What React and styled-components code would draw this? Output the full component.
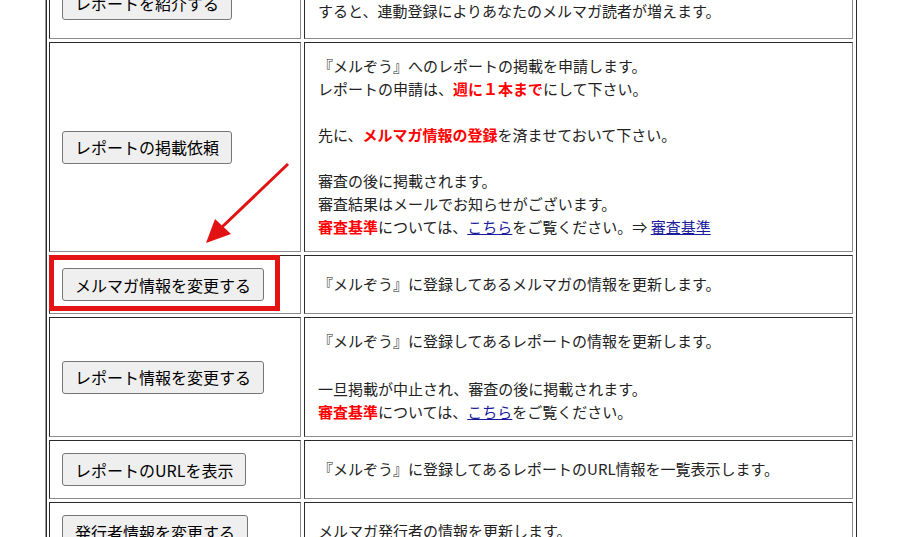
import React from "react";
import styled, { createGlobalStyle } from "styled-components";

const GlobalStyle = createGlobalStyle`
  body {
    margin: 0;
    background: #ffffff;
    font-family: "Noto Sans CJK JP", "Noto Sans", sans-serif;
    color: #222222;
  }
`;

const MenuTable = styled.table`
  margin: -37px 0 0 45px;
  width: 812px;
  table-layout: fixed;
  border-collapse: separate;
  border-spacing: 3px;
  border-top: 1px solid #9a9a9a;
  border-left: 1px solid #9a9a9a;
  border-right: 1px solid #2a2a2a;
  box-shadow: inset 1px 0 0 #2a2a2a;
`;

const Cell = styled.td`
  position: relative;
  box-sizing: border-box;
  padding: ${(p) => (p.$raised ? "8px 12px 16px 13px" : "11px 12px 13px 13px")};
  border: 1px solid;
  border-color: #2a2a2a #8c8c8c #8c8c8c #2a2a2a;
  vertical-align: middle;
`;

const ActionCell = styled(Cell)`
  width: 252px;
  padding: 12px;
`;

const ActionButton = styled.button`
  height: 33px;
  padding: 0 12px;
  font-family: inherit;
  font-size: 16px;
  line-height: 1;
  color: #000000;
  background: #efefef;
  border: 1px solid #767676;
  border-radius: 3px;
  cursor: pointer;
`;

const Para = styled.p`
  margin: ${(p) => (p.$gap ? `${p.$gap}px 0 0` : "0")};
  font-size: 15px;
  line-height: 23px;
  white-space: nowrap;
`;

const Red = styled.strong`
  color: #ff0000;
  font-weight: bold;
`;

const TextLink = styled.a`
  color: #1a1a9c;
  text-decoration: underline;
  cursor: pointer;
`;

const Highlight = styled.div`
  position: absolute;
  left: -1px;
  top: -1px;
  width: 231px;
  height: 56px;
  box-sizing: border-box;
  border: 5px solid #e51414;
  pointer-events: none;
`;

const PointerArrow = styled.svg`
  position: absolute;
  left: 150px;
  top: 110px;
  width: 100px;
  height: 100px;
  overflow: visible;
  pointer-events: none;
`;

const Row = ({ label, children, highlighted, raised }) => (
  <tr>
    <ActionCell>
      <ActionButton>{label}</ActionButton>
      {highlighted && <Highlight />}
    </ActionCell>
    <Cell $raised={raised}>{children}</Cell>
  </tr>
);

export default function App() {
  return (
    <>
      <GlobalStyle />
      <MenuTable>
        <tbody>
          <Row label="レポートを紹介する" raised>
            <Para>他の発行者のレポートをあなたのメルマガで紹介</Para>
            <Para>すると、連動登録によりあなたのメルマガ読者が増えます。</Para>
          </Row>
          <tr>
            <ActionCell>
              <ActionButton>レポートの掲載依頼</ActionButton>
              <PointerArrow viewBox="0 0 100 100">
                <line x1="88" y1="11" x2="21" y2="75" stroke="#e31212" strokeWidth="3" />
                <polygon points="6,90 15,66 31,81" fill="#e31212" />
              </PointerArrow>
            </ActionCell>
            <Cell>
              <Para>『メルぞう』へのレポートの掲載を申請します。</Para>
              <Para>
                レポートの申請は、<Red>週に１本まで</Red>にして下さい。
              </Para>
              <Para $gap={23}>
                先に、<Red>メルマガ情報の登録</Red>を済ませておいて下さい。
              </Para>
              <Para $gap={23}>審査の後に掲載されます。</Para>
              <Para>審査結果はメールでお知らせがございます。</Para>
              <Para>
                <Red>審査基準</Red>については、<TextLink>こちら</TextLink>をご覧ください。⇒{" "}
                <TextLink>審査基準</TextLink>
              </Para>
            </Cell>
          </tr>
          <Row label="メルマガ情報を変更する" highlighted>
            <Para>『メルぞう』に登録してあるメルマガの情報を更新します。</Para>
          </Row>
          <Row label="レポート情報を変更する">
            <Para>『メルぞう』に登録してあるレポートの情報を更新します。</Para>
            <Para $gap={25}>一旦掲載が中止され、審査の後に掲載されます。</Para>
            <Para>
              <Red>審査基準</Red>については、<TextLink>こちら</TextLink>をご覧ください。
            </Para>
          </Row>
          <Row label="レポートのURLを表示">
            <Para>『メルぞう』に登録してあるレポートのURL情報を一覧表示します。</Para>
          </Row>
          <Row label="発行者情報を変更する">
            <Para>メルマガ発行者の情報を更新します。</Para>
          </Row>
        </tbody>
      </MenuTable>
    </>
  );
}
